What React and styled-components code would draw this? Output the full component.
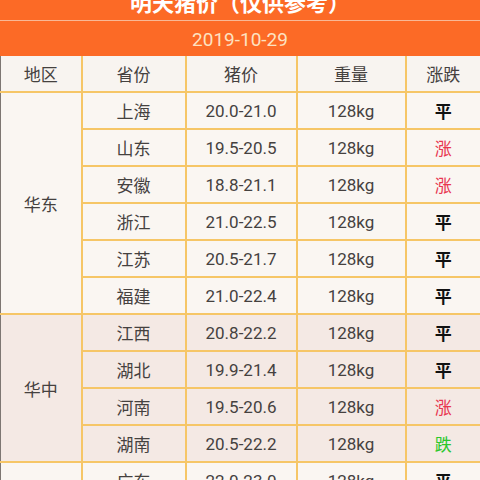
import React from "react";
import styled, { createGlobalStyle } from "styled-components";

const GlobalStyle = createGlobalStyle`
  html, body {
    margin: 0;
    padding: 0;
    background: #faf6f2;
    overflow: hidden;
  }
  body {
    font-family: Roboto, "Noto Sans CJK SC", sans-serif;
  }
`;

const groups = [
  {
    region: "华东",
    tone: "light",
    rows: [
      ["上海", "20.0-21.0", "128kg", "平"],
      ["山东", "19.5-20.5", "128kg", "涨"],
      ["安徽", "18.8-21.1", "128kg", "涨"],
      ["浙江", "21.0-22.5", "128kg", "平"],
      ["江苏", "20.5-21.7", "128kg", "平"],
      ["福建", "21.0-22.4", "128kg", "平"],
    ],
  },
  {
    region: "华中",
    tone: "dark",
    rows: [
      ["江西", "20.8-22.2", "128kg", "平"],
      ["湖北", "19.9-21.4", "128kg", "平"],
      ["河南", "19.5-20.6", "128kg", "涨"],
      ["湖南", "20.5-22.2", "128kg", "跌"],
    ],
  },
  {
    region: "华南",
    tone: "light",
    rows: [
      ["广东", "22.0-23.0", "128kg", "平"],
      ["广西", "21.5-22.6", "128kg", "平"],
      ["海南", "22.0-23.2", "128kg", "平"],
    ],
  },
];

const App = () => {
  return (
    <Page>
      <GlobalStyle />
      <TitleBar>明天猪价（仅供参考）</TitleBar>
      <DateBar>2019-10-29</DateBar>
      <Table>
        <colgroup>
          <col style={{ width: 81 }} />
          <col style={{ width: 104 }} />
          <col style={{ width: 111 }} />
          <col style={{ width: 109 }} />
          <col />
        </colgroup>
        <thead>
          <tr>
            <Th>地区</Th>
            <Th>省份</Th>
            <Th>猪价</Th>
            <Th>重量</Th>
            <Th>涨跌</Th>
          </tr>
        </thead>
        {groups.map((g) => (
          <tbody key={g.region}>
            {g.rows.map((r, i) => (
              <Row key={r[0]} $tone={g.tone}>
                {i === 0 && (
                  <Region rowSpan={g.rows.length}>{g.region}</Region>
                )}
                <Td>{r[0]}</Td>
                <Td>{r[1]}</Td>
                <Td>{r[2]}</Td>
                <Trend $kind={r[3]}>{r[3]}</Trend>
              </Row>
            ))}
          </tbody>
        ))}
      </Table>
    </Page>
  );
};

const Page = styled.div`
  width: 480px;
  margin-top: -17px;
`;

const TitleBar = styled.div`
  height: 37px;
  line-height: 37px;
  background: #fc6a26;
  color: #fff;
  font-size: 22px;
  font-weight: bold;
  text-align: center;
  border-bottom: 1px solid #f8b896;
  font-family: "Noto Sans CJK SC", sans-serif;
`;

const DateBar = styled.div`
  height: 35px;
  line-height: 37px;
  background: #fc6a26;
  color: #fde2c2;
  font-size: 19px;
  text-align: center;
`;

const Table = styled.table`
  width: 480px;
  table-layout: fixed;
  border-collapse: collapse;
  border-left: 1px solid #7d7672;
`;

const cell = `
  height: 35px;
  padding: 0;
  text-align: center;
  vertical-align: middle;
  font-size: 17px;
  color: #45413f;
  border: 2px solid #f6c667;
  border-top: none;
  &:first-child { border-left: none; }
  &:last-child { border-right: none; }
`;

const Th = styled.th`
  ${cell}
  font-weight: normal;
  background: #f8f4f0;
`;

const Row = styled.tr`
  background: ${(p) => (p.$tone === "dark" ? "#f4e9e4" : "#faf6f2")};
`;

const Td = styled.td`
  ${cell}
`;

const Region = styled.td`
  ${cell}
  border-left: none;
`;

const Trend = styled.td`
  ${cell}
  font-weight: ${(p) => (p.$kind === "平" ? "bold" : "normal")};
  color: ${(p) =>
    p.$kind === "涨" ? "#e8354f" : p.$kind === "跌" ? "#2bc72b" : "#111"};
`;

export default App;
